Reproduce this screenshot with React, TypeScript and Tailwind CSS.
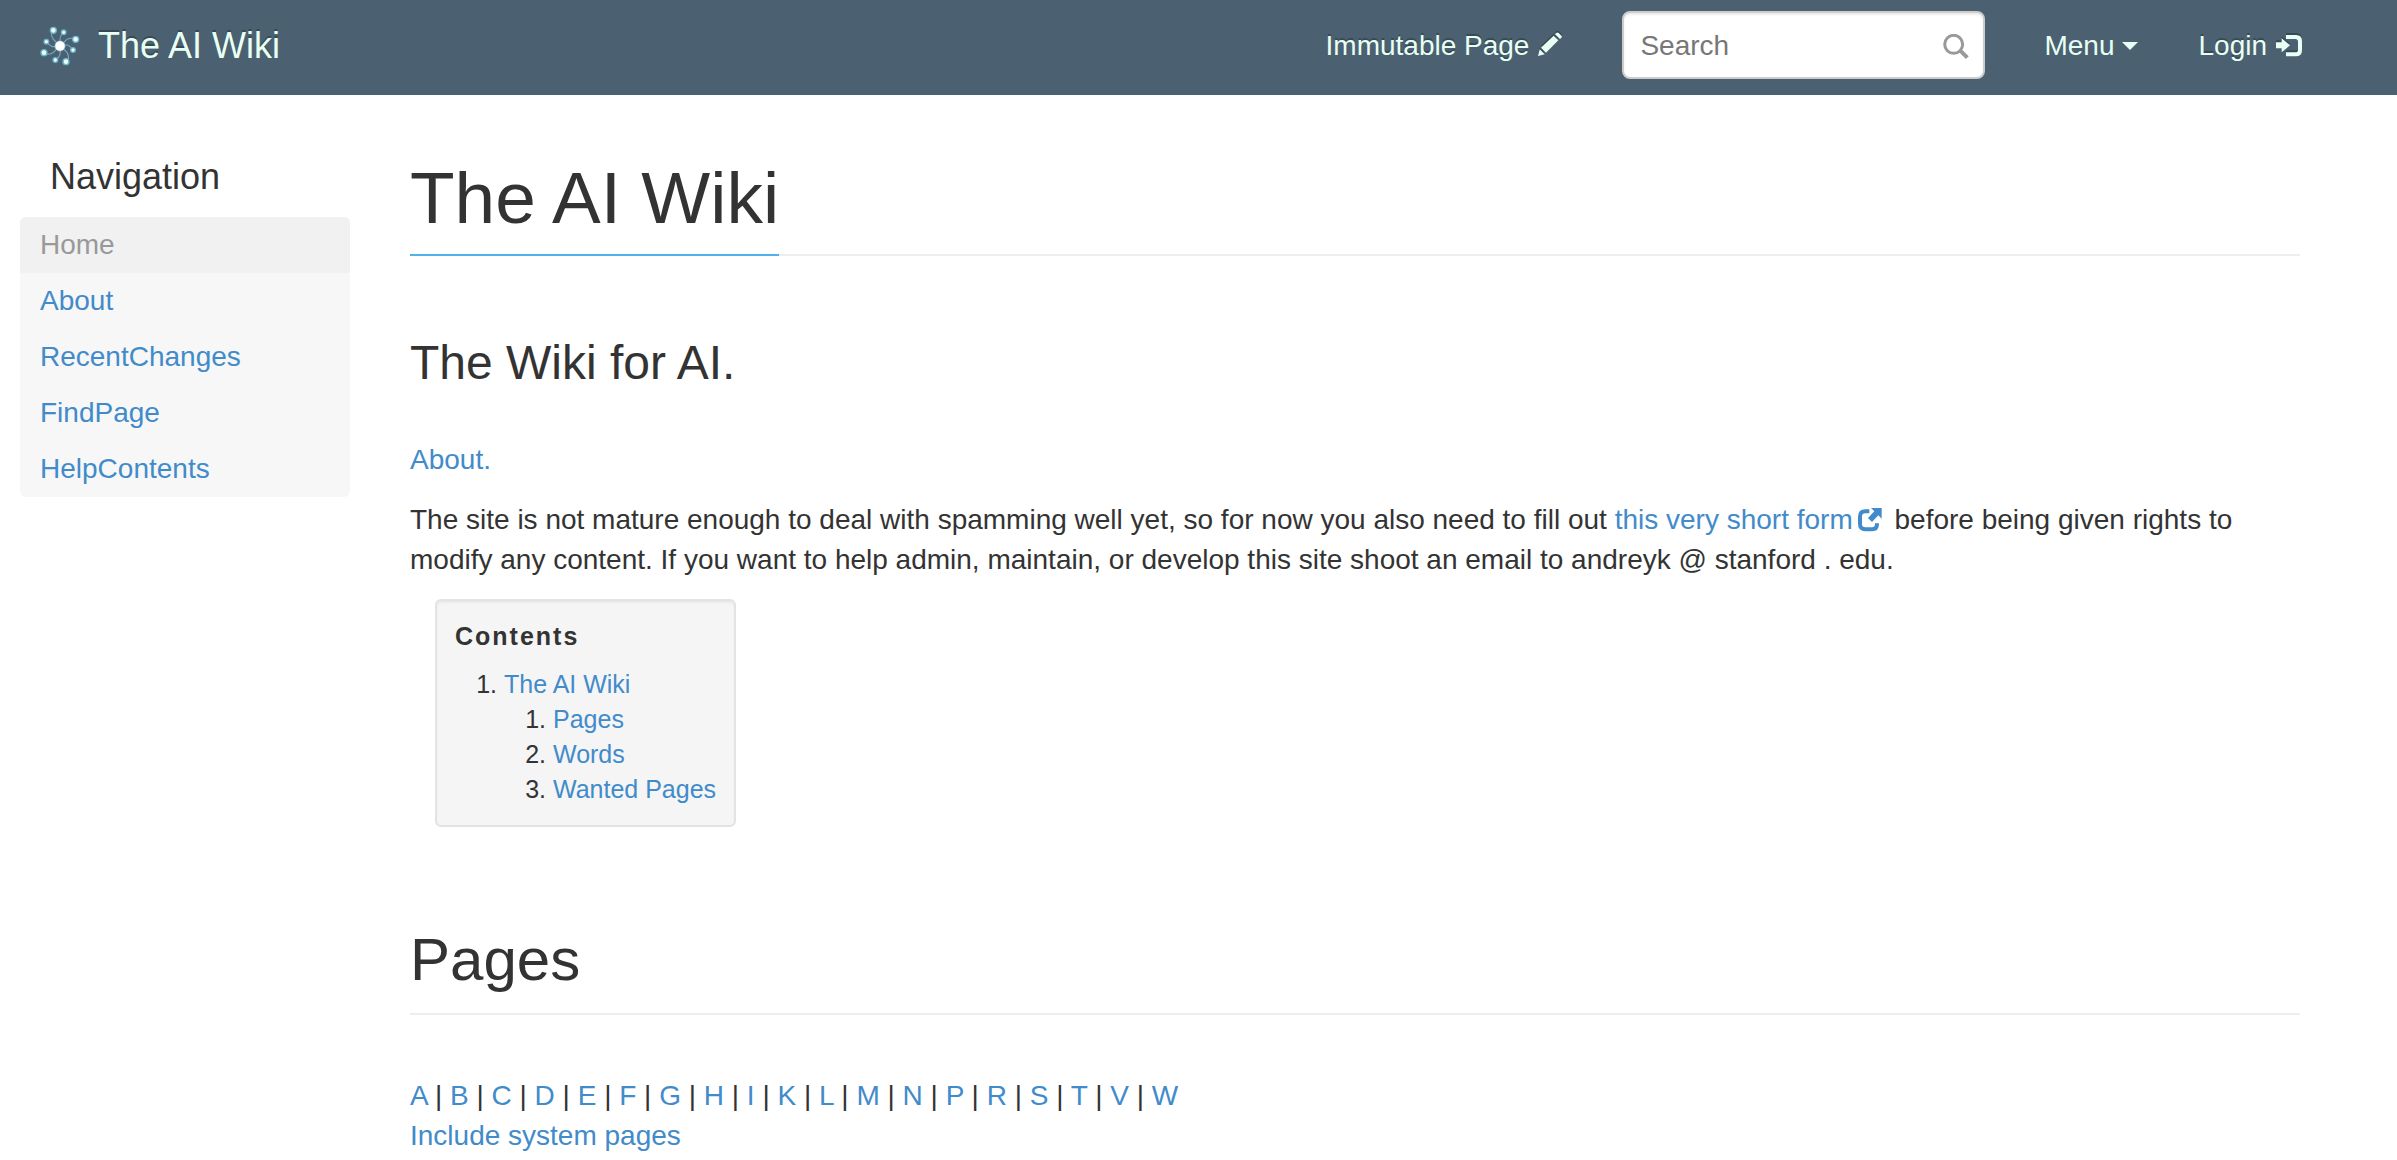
import React from "react";

const sidebarLinks = ["Home", "About", "RecentChanges", "FindPage", "HelpContents"];
const letters = "ABCDEFGHIKLMNPRSTVW".split("");
const linkClass = "text-[#428bca] hover:underline";

function Logo() {
  const nodes = [
    [160, 88, 9], [191, 94, 7], [227, 115, 9], [219, 147, 7],
    [198, 182, 9], [166, 177, 7], [132, 155, 9], [139, 122, 7],
  ];
  return (
    <svg className="h-10 w-10 shrink-0" viewBox="120 75 120 120" aria-hidden="true">
      <g fill="none" stroke="#6fa9c4" strokeWidth="3.5">
        <path d="M180 135C172 122 150 118 155 90" />
        <path d="M180 135C184 120 172 112 190 95" />
        <path d="M180 135C194 130 194 104 227 114" />
        <path d="M180 135C196 134 204 124 219 147" />
        <path d="M180 135C188 146 212 150 204 182" />
        <path d="M180 135C178 150 188 164 166 177" />
        <path d="M180 135C166 140 166 166 132 158" />
        <path d="M180 135C164 136 156 144 139 122" />
      </g>
      {nodes.map(([x, y, r]) => (
        <circle key={x} cx={x} cy={y} r={r} fill="#e8fff4" stroke="#6fb3d0" strokeWidth="4" />
      ))}
      <circle cx="180" cy="135" r="15" fill="#fff" stroke="#a5cfe0" strokeWidth="2" />
    </svg>
  );
}

function PencilIcon() {
  return (
    <svg className="mb-1 h-6 w-6 drop-shadow-[0_-2px_0_rgba(0,0,0,0.25)]" viewBox="0 0 72 72" fill="currentColor" aria-hidden="true">
      <path d="M0 72L5 52L20 67Z" />
      <path d="M9 47L47 11L61 25L24 62Z" />
      <path d="M51 7L55 3Q58 0 62 3L70 11Q73 14 70 17L66 21Z" />
    </svg>
  );
}

function LoginIcon() {
  return (
    <svg className="h-[22px] w-[26px] drop-shadow-[0_-2px_0_rgba(0,0,0,0.25)]" viewBox="0 0 78 66" fill="currentColor" aria-hidden="true">
      <path d="M0 22H17V10L42 31L17 52V40H0Z" />
      <path d="M30 0H60Q78 0 78 18V46Q78 64 60 64H30V52H58Q66 52 66 44V20Q66 12 58 12H30Z" />
    </svg>
  );
}

function SearchIcon() {
  return (
    <svg className="h-[26px] w-[26px]" viewBox="0 0 78 78" fill="none" stroke="currentColor" aria-hidden="true">
      <circle cx="32" cy="31" r="27" strokeWidth="9" />
      <path d="M51 49L73 71" strokeWidth="12" />
    </svg>
  );
}

function ExternalIcon() {
  return (
    <svg className="mx-[5px] inline-block h-6 w-6 align-[-3px]" viewBox="0 0 72 72" aria-hidden="true">
      <path d="M34 10H22Q6 10 6 26V48Q6 64 22 64H42Q57 64 57 49V46" fill="none" stroke="currentColor" strokeWidth="12" />
      <path d="M39 0H71V32L61 22L42 42L30 30L49 10Z" fill="currentColor" />
    </svg>
  );
}

function Header() {
  return (
    <header className="flex h-[95px] items-start bg-[#4b6171] pl-10 pr-[95px] text-[#e8fff4]">
      <a href="#" className="mt-[26px] flex items-center gap-[18px] text-4xl/10 [text-shadow:0_-2px_0_rgba(0,0,0,0.25)]">
        <Logo />
        The AI Wiki
      </a>
      <nav className="ml-auto flex items-start [text-shadow:0_-2px_0_rgba(0,0,0,0.25)]">
        <a href="#" className="mt-[26px] flex items-center gap-[9px]">
          Immutable Page <PencilIcon />
        </a>
        <form className="relative ml-[60px] mt-[11px]" onSubmit={(e) => e.preventDefault()}>
          <input
            type="text"
            aria-label="Search"
            placeholder="Search"
            className="block h-[68px] w-[363px] max-w-full rounded-lg border-2 border-[#ccc] bg-white pl-4 pr-14 pt-[2px] text-[28px] text-[#555] shadow-[inset_0_2px_2px_rgba(0,0,0,0.075)] outline-none placeholder:text-[#777] [text-shadow:none]"
          />
          <button type="submit" aria-label="Submit search" className="absolute right-4 top-[23px] text-[#999]">
            <SearchIcon />
          </button>
        </form>
        <button type="button" className="ml-[59px] mt-[26px] flex items-center gap-2">
          Menu
          <svg className="h-2 w-4" viewBox="0 0 16 8" fill="currentColor" aria-hidden="true">
            <path d="M0 0H16L8 8Z" />
          </svg>
        </button>
        <a href="#" className="ml-[60px] mt-[26px] flex items-center gap-[9px]">
          Login <LoginIcon />
        </a>
      </nav>
    </header>
  );
}

function Sidebar() {
  return (
    <aside className="w-[330px] shrink-0 pt-[62px]">
      <h4 className="mb-5 pl-[30px] text-4xl/10">Navigation</h4>
      <ul className="overflow-hidden rounded-md bg-[#f7f7f7]">
        {sidebarLinks.map((name) => (
          <li key={name}>
            <a
              href="#"
              className={name === "Home" ? "block bg-[#f1f1f1] px-5 py-2 text-[#999]" : "block px-5 py-2 text-[#428bca] hover:underline"}
            >
              {name}
            </a>
          </li>
        ))}
      </ul>
    </aside>
  );
}

function Contents() {
  return (
    <section className="ml-[25px] mt-[19px] w-fit rounded-md border-2 border-[#e3e3e3] bg-[#f5f5f5] p-[18px] text-[25px]/[35px] shadow-[inset_0_2px_2px_rgba(0,0,0,0.05)]">
      <p className="mb-[13px] font-bold tracking-[2px]">Contents</p>
      <ol className="list-decimal pl-[49px]">
        <li>
          <a href="#top" className={linkClass}>The AI Wiki</a>
          <ol className="list-decimal pl-[49px]">
            <li><a href="#pages" className={linkClass}>Pages</a></li>
            <li><a href="#words" className={linkClass}>Words</a></li>
            <li><a href="#wanted" className={linkClass}>Wanted Pages</a></li>
          </ol>
        </li>
      </ol>
    </section>
  );
}

export default function App() {
  return (
    <div className="min-h-screen bg-white font-['Liberation_Sans',Arial,sans-serif] text-[28px]/10 text-[#333]">
      <Header />
      <div className="flex gap-[60px] pl-5 pr-[97px]">
        <Sidebar />
        <main className="min-w-0 flex-1 pb-1 pt-[63px]">
          <h1 id="top" className="flex border-b-2 border-[#eee] text-[73px]/[79px]">
            <span className="-mb-[2px] border-b-2 border-[#50b2e6] pb-[17px]">The AI Wiki</span>
          </h1>
          <h3 className="mt-20 text-5xl/[53px]">The Wiki for AI.</h3>
          <p className="mt-[51px]"><a href="#" className={linkClass}>About.</a></p>
          <p className="mt-5">
            The site is not mature enough to deal with spamming well yet, so for now you also need to fill out{" "}
            <a href="#" className={linkClass}>this very short form<ExternalIcon /></a>{" "}
            before being given rights to modify any content. If you want to help admin, maintain, or develop this site
            shoot an email to andreyk @ stanford . edu.
          </p>
          <Contents />
          <h2 id="pages" className="mt-[100px] border-b-2 border-[#eee] pb-5 text-6xl/[66px]">Pages</h2>
          <p className="mt-[61px]">
            {letters.map((letter, i) => (
              <React.Fragment key={letter}>
                {i > 0 && " | "}
                <a href="#" className={linkClass}>{letter}</a>
              </React.Fragment>
            ))}
          </p>
          <p><a href="#" className={linkClass}>Include system pages</a></p>
        </main>
      </div>
    </div>
  );
}
